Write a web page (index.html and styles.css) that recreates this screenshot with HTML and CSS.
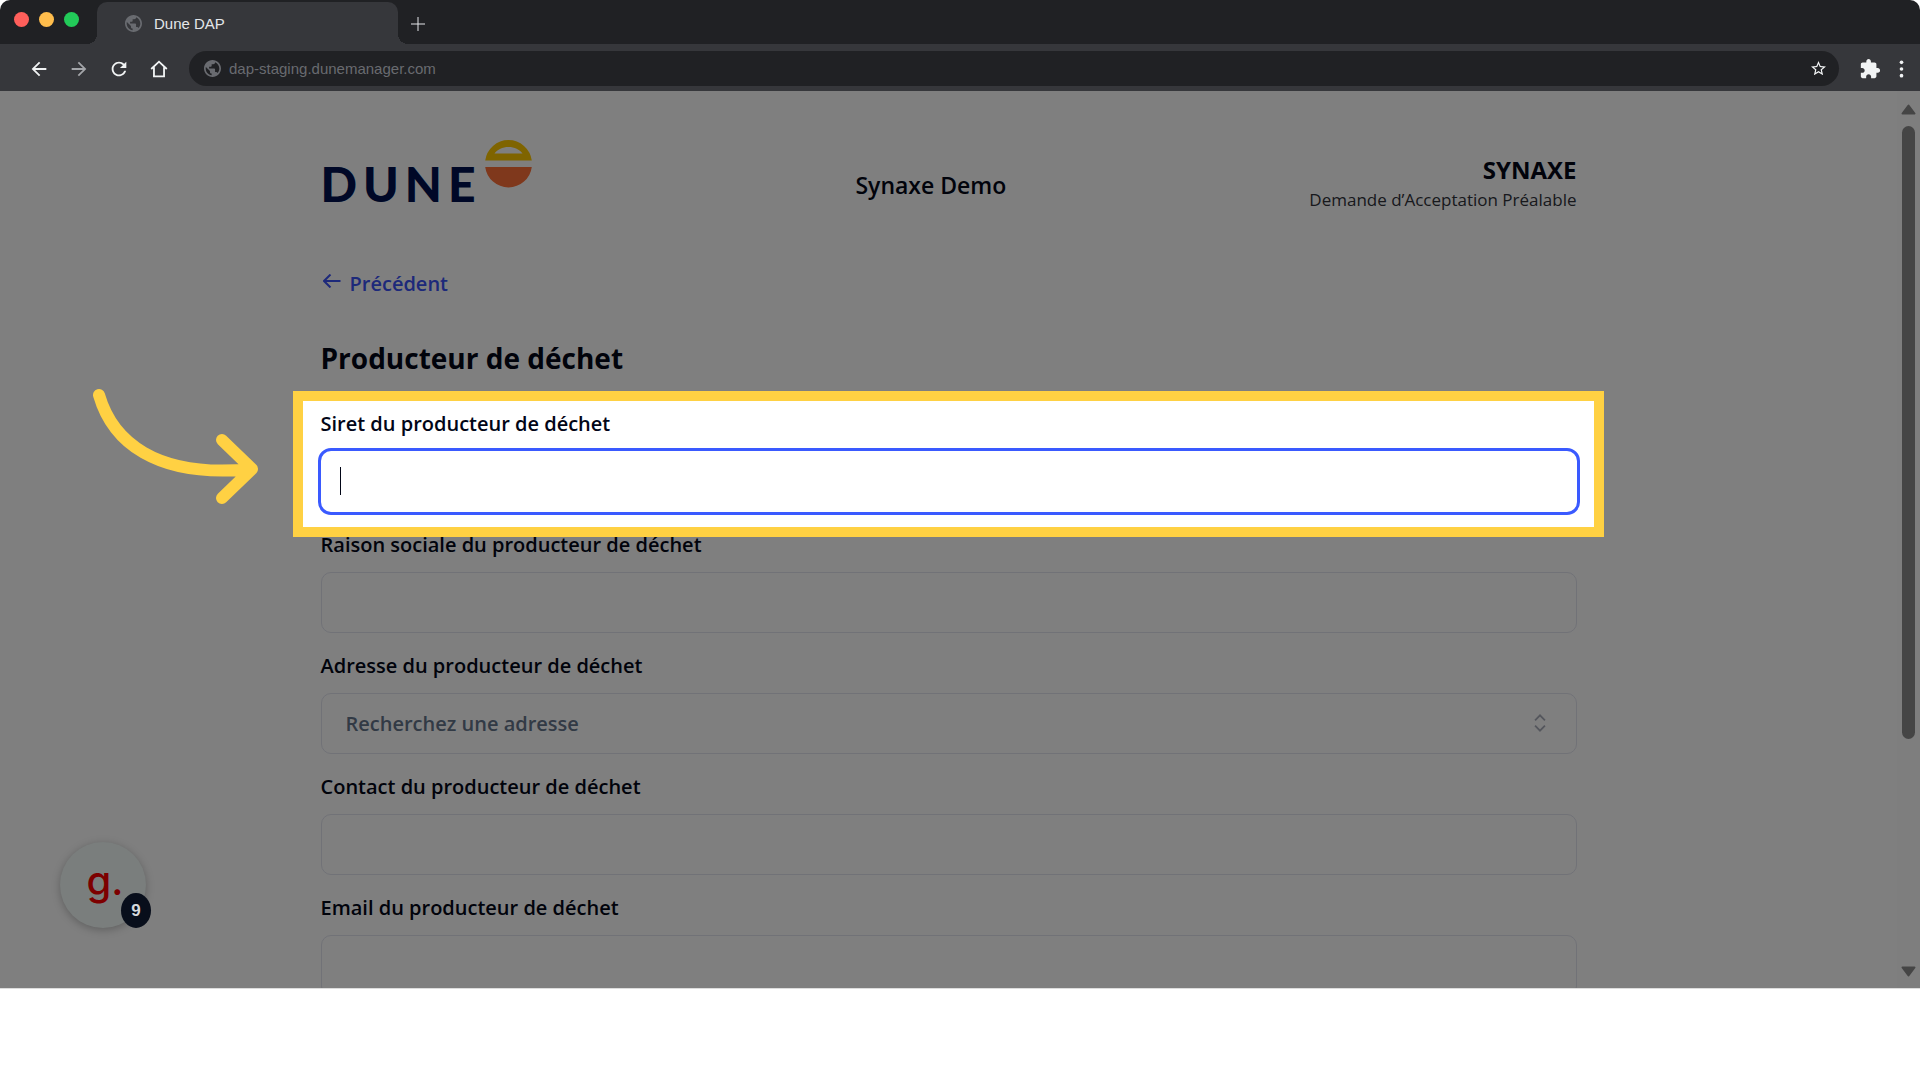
FILE: index.html
```html
<!DOCTYPE html>
<html lang="fr">
<head>
<meta charset="utf-8">
<meta name="viewport" content="width=device-width, initial-scale=1">
<title>Dune DAP</title>
<link rel="stylesheet" href="styles.css">
</head>
<body>
<div class="browser">
  <div class="tabstrip">
    <div class="lights"><span class="light red"></span><span class="light amber"></span><span class="light green"></span></div>
    <div class="tab">
      <svg class="globe" viewBox="2 2 20 20" aria-hidden="true"><path d="M12 2C6.480 2 2 6.480 2 12s4.480 10 10 10 10-4.480 10-10S17.520 2 12 2zm-1 17.930c-3.950-.49-7-3.850-7-7.930 0-.62.08-1.210.21-1.790L9 15v1c0 1.100.9 2 2 2v1.930zm6.900-2.540c-.26-.81-1-1.390-1.900-1.390h-1v-3c0-.55-.45-1-1-1H8v-2h2c.55 0 1-.45 1-1V7h2c1.100 0 2-.9 2-2v-.41c2.930 1.190 5 4.060 5 7.410 0 2.080-.8 3.970-2.100 5.390z"/></svg>
      <span>Dune DAP</span>
    </div>
    <button class="newtab" aria-label="Nouvel onglet"><svg viewBox="0 0 16 16"><path d="M8 1v14M1 8h14"/></svg></button>
  </div>
  <div class="toolbar">
    <nav class="controls" aria-label="Navigation">
      <button class="tool" aria-label="Retour"><svg viewBox="0 0 24 24"><path d="M20 11H7.830l5.590-5.590L12 4l-8 8 8 8 1.410-1.410L7.830 13H20v-2z"/></svg></button>
      <button class="tool faded" aria-label="Suivant"><svg viewBox="0 0 24 24"><path d="M12 4l-1.410 1.410L16.170 11H4v2h12.170l-5.580 5.590L12 20l8-8z"/></svg></button>
      <button class="tool" aria-label="Actualiser"><svg viewBox="0 0 24 24"><path d="M17.650 6.350C16.200 4.900 14.210 4 12 4c-4.420 0-7.990 3.580-7.990 8s3.570 8 7.990 8c3.730 0 6.840-2.550 7.730-6h-2.080c-.82 2.330-3.040 4-5.650 4-3.310 0-6-2.690-6-6s2.690-6 6-6c1.660 0 3.140.69 4.220 1.780L13 11h7V4l-2.350 2.350z"/></svg></button>
      <button class="tool" aria-label="Accueil"><svg viewBox="0 0 24 24"><path class="line" d="M3.500 12 12 4l8.500 8M6.500 10v10h11V10"/></svg></button>
    </nav>
    <div class="omnibox">
      <svg class="globe" viewBox="2 2 20 20" aria-hidden="true"><path d="M12 2C6.480 2 2 6.480 2 12s4.480 10 10 10 10-4.480 10-10S17.520 2 12 2zm-1 17.930c-3.950-.49-7-3.850-7-7.930 0-.62.08-1.210.21-1.790L9 15v1c0 1.100.9 2 2 2v1.930zm6.900-2.540c-.26-.81-1-1.390-1.900-1.390h-1v-3c0-.55-.45-1-1-1H8v-2h2c.55 0 1-.45 1-1V7h2c1.100 0 2-.9 2-2v-.41c2.930 1.190 5 4.060 5 7.410 0 2.080-.8 3.970-2.100 5.390z"/></svg>
      <input class="url" type="text" aria-label="Adresse web" value="dap-staging.dunemanager.com">
      <button class="star" aria-label="Ajouter aux favoris"><svg viewBox="2 2 20 20"><path d="M22 9.240l-7.190-.62L12 2 9.190 8.630 2 9.240l5.460 4.730L5.820 21 12 17.270 18.180 21l-1.630-7.030L22 9.240zM12 15.400l-3.760 2.270 1-4.280-3.320-2.880 4.380-.38L12 6.100l1.710 4.040 4.380.38-3.320 2.880 1 4.280L12 15.400z"/></svg></button>
    </div>
    <div class="extras">
      <button class="tool" aria-label="Extensions"><svg viewBox="0 0 24 24"><path d="M20.500 11H19V7c0-1.100-.9-2-2-2h-4V3.500C13 2.120 11.880 1 10.500 1S8 2.120 8 3.500V5H4c-1.100 0-1.990.9-1.990 2v3.800H3.500c1.490 0 2.700 1.210 2.700 2.700s-1.210 2.700-2.700 2.700H2V20c0 1.100.9 2 2 2h3.800v-1.500c0-1.490 1.210-2.700 2.700-2.700s2.700 1.210 2.700 2.700V22H17c1.100 0 2-.9 2-2v-4h1.500c1.380 0 2.500-1.120 2.500-2.500S21.880 11 20.500 11z"/></svg></button>
      <button class="tool" aria-label="Menu"><svg viewBox="0 0 24 24"><circle cx="12" cy="4" r="2.200"/><circle cx="12" cy="12" r="2.200"/><circle cx="12" cy="20" r="2.200"/></svg></button>
    </div>
  </div>

  <div class="viewport">
    <main class="page">
      <header class="header">
        <div class="logo">
          <span class="wordmark">DUNE</span>
          <svg class="sun" viewBox="0 0 48 48" aria-hidden="true"><path fill="#ffc800" fill-rule="evenodd" d="M.2 20.500a23.500 23.500 0 0 1 46.600 0zM9.500 13.500h28C34.500 9.500 29.500 7 23.500 7s-11 2.500-14 6.500z"/><path fill="#ff7038" d="M.2 27h46.600a23.500 23.500 0 0 1-46.600 0z"/></svg>
        </div>
        <p class="client">Synaxe Demo</p>
        <div class="owner">
          <p class="owner-name">SYNAXE</p>
          <p class="owner-note">Demande d’Acceptation Préalable</p>
        </div>
      </header>
      <a class="back" href="#"><svg viewBox="0 0 18 14" aria-hidden="true"><path d="M17.500 7H1M7.500.5 1 7l6.500 6.500"/></svg>Précédent</a>
      <h1 class="title">Producteur de déchet</h1>
      <form class="form">
        <div class="field spotlit">
          <label for="siret">Siret du producteur de déchet</label>
          <div class="control"><input class="box focused" id="siret" type="text"><span class="caret"></span></div>
        </div>
        <div class="field">
          <label for="raison">Raison sociale du producteur de déchet</label>
          <input class="box" id="raison" type="text">
        </div>
        <div class="field">
          <label for="adresse">Adresse du producteur de déchet</label>
          <div class="control">
            <input class="box" id="adresse" type="text" role="combobox" aria-expanded="false" placeholder="Recherchez une adresse">
            <svg class="chevrons" viewBox="0 0 14 20" aria-hidden="true"><path d="m1.500 7 5.500-5.500L12.500 7M1.500 13l5.500 5.500 5.500-5.500"/></svg>
          </div>
        </div>
        <div class="field">
          <label for="contact">Contact du producteur de déchet</label>
          <input class="box" id="contact" type="text">
        </div>
        <div class="field">
          <label for="email">Email du producteur de déchet</label>
          <input class="box" id="email" type="email">
        </div>
      </form>
    </main>
    <div class="scrollbar" aria-hidden="true">
      <svg class="step" viewBox="0 0 15 11"><path d="M7.500 1.500 13.500 9.500H1.500z"/></svg>
      <div class="track"><div class="thumb"></div></div>
      <svg class="step" viewBox="0 0 15 11"><path d="M7.500 9.500 13.500 1.500H1.500z"/></svg>
    </div>
    <svg class="pointer" viewBox="0 0 168 118" aria-hidden="true"><path d="M7 7C20 52 62 91 160 81M130 52l30 29-30 29"/></svg>
    <button class="guide" aria-label="Ouvrir le guide"><span class="guide-mark">g.</span><span class="guide-count">9</span></button>
  </div>
</div>
</body>
</html>
```
FILE: styles.css
```css
* { box-sizing: border-box; }

body {
  margin: 0;
  background: #fff;
  color: #020617;
  font-family: "Open Sans", "Noto Sans", sans-serif;
  font-size: 20px;
}

p, h1 { margin: 0; }

button {
  display: flex;
  align-items: center;
  justify-content: center;
  padding: 0;
  border: 0;
  background: none;
  color: #f1f3f4;
}

svg { display: block; flex: none; fill: currentColor; }

/* Browser frame */
.browser {
  display: flex;
  flex-direction: column;
  height: calc(100vh - 91px);
  border-radius: 10px 10px 0 0;
  overflow: hidden;
  font-family: "Liberation Sans", Arial, sans-serif;
}

.tabstrip {
  display: flex;
  height: 44px;
  padding: 2px 14px 0;
  background: #202124;
}

.lights { display: flex; gap: 10px; width: 83px; padding-top: 10px; }
.light { width: 15px; height: 15px; border-radius: 50%; }
.red { background: #ff5f5b; }
.amber { background: #ffbd4c; }
.green { background: #22cb59; }

.tab {
  position: relative;
  display: flex;
  align-items: center;
  gap: 12px;
  width: 301px;
  padding: 0 28px;
  border-radius: 10px 10px 0 0;
  background: #36373b;
  color: #e4e6e9;
  font-size: 15px;
}
.tab::before,
.tab::after {
  content: "";
  position: absolute;
  bottom: 0;
  width: 10px;
  height: 10px;
}
.tab::before { right: 100%; background: radial-gradient(circle at 0 0, transparent 10px, #36373b 10px); }
.tab::after { left: 100%; background: radial-gradient(circle at 100% 0, transparent 10px, #36373b 10px); }

.globe { width: 17px; height: 17px; color: #696b70; }
.newtab { width: 40px; padding-top: 2px; }
.newtab svg { width: 16px; height: 16px; stroke: #e4e6e9; stroke-width: 1; }

.toolbar {
  display: flex;
  align-items: center;
  height: 47px;
  padding: 2px 8px 0 28px;
  background: #36373b;
}

.controls { display: flex; gap: 18px; width: 161px; }
.tool svg { width: 22px; height: 22px; }
.faded { color: #a3a5a9; }
.line { fill: none; stroke: currentColor; stroke-width: 2; }

.omnibox {
  flex: 1;
  display: flex;
  align-items: center;
  gap: 8px;
  height: 35px;
  padding: 0 13px 0 15px;
  border-radius: 18px;
  background: #202124;
}
.url {
  flex: 1;
  min-width: 0;
  padding: 0;
  border: 0;
  outline: 0;
  background: none;
  color: #696b70;
  font: 15px "Liberation Sans", Arial, sans-serif;
}
.star svg { width: 15px; height: 15px; }
.extras { display: flex; gap: 10px; padding-left: 20px; }
.extras .tool:last-child svg { width: 21px; height: 20px; }

/* Web page */
.viewport {
  position: relative;
  flex: 1;
  display: flex;
  min-height: 0;
  border-bottom: 1px solid #ddd;
  overflow: hidden;
  font-family: "Open Sans", "Noto Sans", sans-serif;
}

.page {
  width: 100%;
  max-width: 1256px;
  margin: 0 auto;
}

.header {
  display: flex;
  align-items: center;
  justify-content: space-between;
  height: 139px;
  padding-top: 49px;
}

.logo {
  display: flex;
  align-items: flex-start;
  align-self: flex-start;
  width: 232px;
}
.wordmark {
  width: 164px;
  padding-top: 20px;
  color: #00114f;
  font: 900 48px/48px Lato, sans-serif;
  letter-spacing: 6px;
}
.sun { width: 48px; height: 48px; }
.client { font-size: 23px; font-weight: 600; }
.owner { text-align: right; }
.owner-name { font-size: 24px; line-height: 30px; font-weight: 700; }
.owner-note { color: #30323a; font-size: 17px; line-height: 30px; }

.back {
  display: flex;
  align-items: center;
  gap: 9px;
  width: max-content;
  height: 28px;
  margin-top: 39px;
  padding-left: 2px;
  color: #3b52f5;
  font-size: 20px;
  font-weight: 600;
  text-decoration: none;
}
.back svg { width: 18px; height: 14px; margin-bottom: 4px; fill: none; stroke: currentColor; stroke-width: 2; }

.title {
  margin: 40px 0 32px;
  font-size: 28px;
  line-height: 42px;
  font-weight: 700;
}

.form { display: flex; flex-direction: column; gap: 20px; }
.field { display: flex; flex-direction: column; gap: 14px; }
.field label { font-size: 20px; line-height: 26px; font-weight: 600; }
.control { position: relative; display: flex; }

.box {
  width: 100%;
  height: 61px;
  padding: 0 24px;
  border: 1px solid #e2e4ee;
  border-radius: 10px;
  background: #fff;
  font: 600 20px/28px "Open Sans", "Noto Sans", sans-serif;
}
.box::placeholder { color: #64748b; opacity: 1; }
.focused { border-color: #fff; outline: 3px solid #3a5aff; }

.caret {
  position: absolute;
  top: 16px;
  left: 19px;
  width: 1px;
  height: 28px;
  background: #020617;
}
.chevrons {
  position: absolute;
  top: 21px;
  right: 30px;
  width: 14px;
  height: 18px;
  fill: none;
  stroke: #a9adb9;
  stroke-width: 2;
}

/* Tour highlight: yellow frame, everything around it dimmed */
.spotlit { position: relative; }
.spotlit::after {
  content: "";
  position: absolute;
  z-index: 2;
  inset: -20px -27px -25px -28px;
  border: 10px solid #ffd143;
  box-shadow: 0 0 0 3000px rgba(0, 0, 0, 0.5);
  pointer-events: none;
}

.pointer {
  position: absolute;
  z-index: 3;
  top: 297px;
  left: 92px;
  width: 168px;
  height: 118px;
  fill: none;
  stroke: #ffd143;
  stroke-width: 12;
  stroke-linecap: round;
  stroke-linejoin: round;
}

.guide {
  position: absolute;
  z-index: 3;
  bottom: 60px;
  left: 60px;
  width: 86px;
  height: 86px;
  border-radius: 50%;
  background: #7a7e7d;
  box-shadow: 0 2px 8px rgba(0, 0, 0, 0.25);
}
.guide-mark {
  padding: 0 0 8px 4px;
  color: #7d0000;
  font: 500 40px/48px Inter, sans-serif;
}
.guide-count {
  position: absolute;
  right: -5px;
  bottom: 0;
  width: 30px;
  height: 35px;
  border-radius: 50%;
  background: #080e1b;
  color: #d5d8dc;
  font: 700 17px/35px "Liberation Sans", Arial, sans-serif;
}

.scrollbar {
  display: flex;
  flex-direction: column;
  align-items: center;
  gap: 11px;
  width: 23px;
  padding: 13px 0 11px;
  background: #fcfcfc;
}
.step { width: 15px; height: 11px; color: #8b8b8b; stroke: currentColor; stroke-width: 2; stroke-linejoin: round; }
.track { flex: 1; width: 13px; }
.thumb { height: 74%; border-radius: 7px; background: #8b8b8b; }
```
